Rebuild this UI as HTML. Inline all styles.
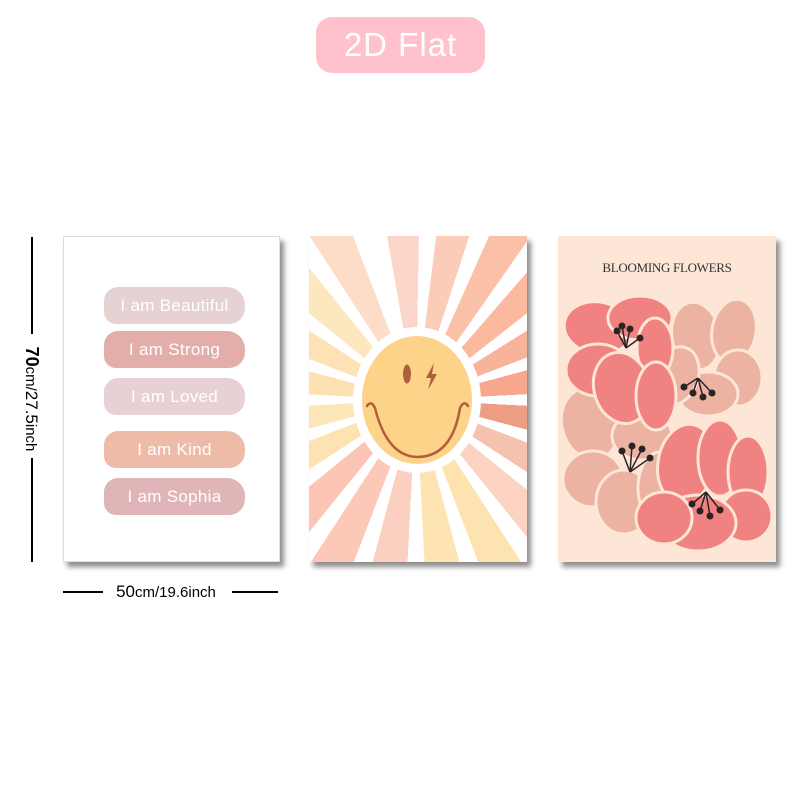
<!DOCTYPE html>
<html><head><meta charset="utf-8"><style>
*{margin:0;padding:0;box-sizing:border-box}
body{width:800px;height:800px;background:#fff;position:relative;overflow:hidden;font-family:"Liberation Sans",sans-serif}
.badge{position:absolute;left:316px;top:17px;width:169px;height:56px;background:#ffc2cc;border-radius:16px;color:#fff;font-size:33px;text-align:center;line-height:56px;letter-spacing:1px}
.panel{position:absolute;top:236px;height:326px;box-shadow:4px 5px 5px rgba(0,0,0,.45)}
.p1{left:63px;width:217px;background:#fff;border:1px solid #ddd}
.p2{left:309px;width:218px;overflow:hidden;background:#fff}
.p3{left:558px;width:218px;background:#fde6d6;overflow:hidden}
.blob{position:absolute;left:40px;width:141px;height:37px;border-radius:14px 18px 16px 12px;color:#fff;font-size:17px;text-align:center;line-height:37px;letter-spacing:.3px}
.vl{position:absolute;left:31px;width:2px;background:#000}
.hl{position:absolute;top:591px;height:2px;background:#000}
</style></head><body>
<div class="badge">2D Flat</div>

<div class="vl" style="top:237px;height:97px"></div>
<div class="vl" style="top:458px;height:104px"></div>
<div style="position:absolute;left:-28px;top:384px;width:120px;height:30px;transform:rotate(90deg);text-align:center;font-size:15px;color:#000;line-height:30px"><b style="font-size:18px">70</b>cm/<b style="font-size:17px;font-weight:normal">27.5</b>inch</div>
<div class="hl" style="left:63px;width:40px"></div>
<div class="hl" style="left:232px;width:46px"></div>
<div style="position:absolute;left:103px;top:582px;width:126px;text-align:center;font-size:15px;color:#000"><span style="font-size:17px">50</span>cm/19.6inch</div>

<div class="panel p1">
<div class="blob" style="top:50px;background:#e6d2d3">I am Beautiful</div>
<div class="blob" style="top:94px;background:#e3aeaa">I am Strong</div>
<div class="blob" style="top:141px;background:#e7d1d4">I am Loved</div>
<div class="blob" style="top:194px;background:#efbba9">I am Kind</div>
<div class="blob" style="top:241px;background:#e0b5b7">I am Sophia</div>
</div>

<div class="panel p2">
<div style="position:absolute;left:-200px;top:-200px;width:618px;height:728px;background:conic-gradient(from -10deg at 307px 364px,
#fcd6c8 0deg 11deg,#fff 11deg 17deg,#fbcdb8 17deg 28deg,#fff 28deg 34deg,#fbc0a8 34deg 45deg,#fff 45deg 51deg,#fbb9a0 51deg 62deg,#fff 62deg 68deg,#f9b39a 68deg 79deg,#fff 79deg 85deg,#f8a68e 85deg 97deg,#fff 97deg 103deg,#ee9d85 103deg 115deg,#fff 115deg 121deg,#f6c2b0 121deg 133deg,#fff 133deg 139deg,#fcd3c2 139deg 151deg,#fff 151deg 157deg,#fde3b0 157deg 169deg,#fff 169deg 175deg,#fde4b2 175deg 187deg,#fff 187deg 193deg,#fcd0c0 193deg 205deg,#fff 205deg 211deg,#fcc9b8 211deg 223deg,#fff 223deg 229deg,#fbc4b4 229deg 241deg,#fff 241deg 247deg,#fde3b0 247deg 259deg,#fff 259deg 265deg,#fde6b8 265deg 277deg,#fff 277deg 283deg,#fde1b2 283deg 295deg,#fff 295deg 301deg,#fde2b6 301deg 313deg,#fff 313deg 319deg,#fde7be 319deg 331deg,#fff 331deg 337deg,#fddcc8 337deg 349deg,#fff 349deg 360deg)"></div>
<svg style="position:absolute;left:0;top:0" width="218" height="326">
<ellipse cx="108" cy="164" rx="64" ry="73" fill="#fff"/>
<ellipse cx="108" cy="164" rx="55" ry="64" fill="#fdd38a"/>
<ellipse cx="98" cy="138" rx="4" ry="9.5" fill="#b35e3a"/>
<path d="M125 127 L117 142 L122 142 L119 154 L128 138 L123 138 Z" fill="#b35e3a"/>
<path d="M58 170 Q62 164 66 172 Q78 220 108 221 Q143 221 151 172 Q155 164 159 170" fill="none" stroke="#b35e3a" stroke-width="2.5" stroke-linecap="round"/>
</svg>
</div>

<div class="panel p3">
<div style="position:absolute;top:24px;width:100%;text-align:center;font-family:'Liberation Serif',serif;font-size:13px;color:#333;letter-spacing:-.3px">BLOOMING FLOWERS</div>
<svg style="position:absolute;left:0;top:0" width="218" height="326">
<g stroke="#fde6d6" stroke-width="3">
<g fill="#ecb3a3">
<ellipse cx="138" cy="100" rx="24" ry="34" transform="rotate(-10 138 100)"/>
<ellipse cx="176" cy="95" rx="22" ry="32" transform="rotate(10 176 95)"/>
<ellipse cx="180" cy="142" rx="24" ry="28"/>
<ellipse cx="150" cy="158" rx="30" ry="22"/>
<ellipse cx="118" cy="140" rx="22" ry="30" transform="rotate(20 118 140)"/>
</g>
<g fill="#ecb3a3">
<ellipse cx="32" cy="188" rx="28" ry="36" transform="rotate(-15 32 188)"/>
<ellipse cx="84" cy="200" rx="30" ry="24"/>
<ellipse cx="35" cy="243" rx="30" ry="28"/>
<ellipse cx="66" cy="266" rx="28" ry="32"/>
<ellipse cx="102" cy="252" rx="22" ry="36"/>
</g>
<g fill="#f08282">
<ellipse cx="40" cy="92" rx="34" ry="26" transform="rotate(10 40 92)"/>
<ellipse cx="82" cy="82" rx="32" ry="22"/>
<ellipse cx="97" cy="112" rx="18" ry="30"/>
<ellipse cx="40" cy="134" rx="32" ry="26"/>
<ellipse cx="64" cy="152" rx="28" ry="36" transform="rotate(-15 64 152)"/>
<ellipse cx="98" cy="160" rx="20" ry="34"/>
</g>
<g fill="#f08282">
<ellipse cx="128" cy="228" rx="28" ry="40" transform="rotate(10 128 228)"/>
<ellipse cx="162" cy="222" rx="22" ry="38"/>
<ellipse cx="190" cy="236" rx="20" ry="36"/>
<ellipse cx="188" cy="280" rx="26" ry="26"/>
<ellipse cx="140" cy="287" rx="38" ry="28"/>
<ellipse cx="106" cy="282" rx="28" ry="26"/>
</g>
</g>
<g stroke="#2b2424" stroke-width="1.5" fill="none">
<path d="M68 112 L59 95 M68 112 L64 90 M68 112 L72 93 M68 112 L82 102"/>
<path d="M140 142 L126 151 M140 142 L135 157 M140 142 L145 161 M140 142 L154 157"/>
<path d="M72 236 L64 215 M72 236 L74 210 M72 236 L84 213 M72 236 L92 222"/>
<path d="M148 256 L134 268 M148 256 L142 275 M148 256 L152 280 M148 256 L162 274"/>
</g>
<g fill="#2b2424">
<circle cx="59" cy="95" r="3.5"/><circle cx="64" cy="90" r="3.5"/><circle cx="72" cy="93" r="3.5"/><circle cx="82" cy="102" r="3.5"/>
<circle cx="126" cy="151" r="3.5"/><circle cx="135" cy="157" r="3.5"/><circle cx="145" cy="161" r="3.5"/><circle cx="154" cy="157" r="3.5"/>
<circle cx="64" cy="215" r="3.5"/><circle cx="74" cy="210" r="3.5"/><circle cx="84" cy="213" r="3.5"/><circle cx="92" cy="222" r="3.5"/>
<circle cx="134" cy="268" r="3.5"/><circle cx="142" cy="275" r="3.5"/><circle cx="152" cy="280" r="3.5"/><circle cx="162" cy="274" r="3.5"/>
</g>
</svg>
</div>
</body></html>
